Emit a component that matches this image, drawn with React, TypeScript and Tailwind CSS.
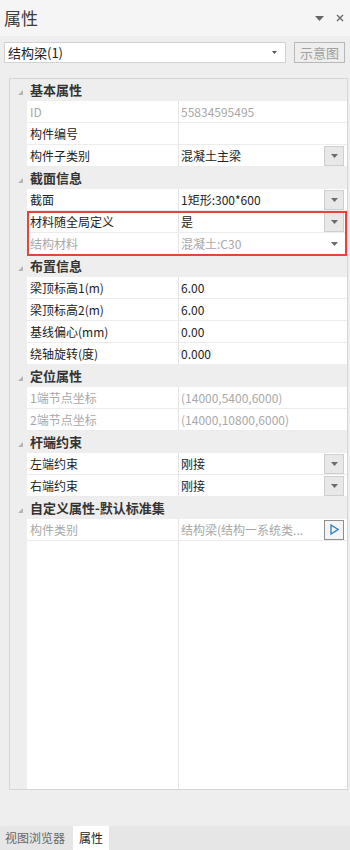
import React from 'react'

type Row =
  | { kind: 'cat'; label: string }
  | { kind: 'row'; label: string; value?: string; dim?: boolean; drop?: 'btn' | 'arrow'; more?: boolean }

const rows: Row[] = [
  { kind: 'cat', label: '基本属性' },
  { kind: 'row', label: 'ID', value: '55834595495', dim: true },
  { kind: 'row', label: '构件编号', value: '' },
  { kind: 'row', label: '构件子类别', value: '混凝土主梁', drop: 'btn' },
  { kind: 'cat', label: '截面信息' },
  { kind: 'row', label: '截面', value: '1矩形:300*600', drop: 'btn' },
  { kind: 'row', label: '材料随全局定义', value: '是', drop: 'btn' },
  { kind: 'row', label: '结构材料', value: '混凝土:C30', dim: true, drop: 'arrow' },
  { kind: 'cat', label: '布置信息' },
  { kind: 'row', label: '梁顶标高1(m)', value: '6.00' },
  { kind: 'row', label: '梁顶标高2(m)', value: '6.00' },
  { kind: 'row', label: '基线偏心(mm)', value: '0.00' },
  { kind: 'row', label: '绕轴旋转(度)', value: '0.000' },
  { kind: 'cat', label: '定位属性' },
  { kind: 'row', label: '1端节点坐标', value: '(14000,5400,6000)', dim: true },
  { kind: 'row', label: '2端节点坐标', value: '(14000,10800,6000)', dim: true },
  { kind: 'cat', label: '杆端约束' },
  { kind: 'row', label: '左端约束', value: '刚接', drop: 'btn' },
  { kind: 'row', label: '右端约束', value: '刚接', drop: 'btn' },
  { kind: 'cat', label: '自定义属性-默认标准集' },
  { kind: 'row', label: '构件类别', value: '结构梁(结构一系统类...', dim: true, more: true },
]

const Caret = () => (
  <svg width="7" height="4" viewBox="0 0 7 4">
    <path d="M0 0h7L3.5 4z" fill="#6b6b6b" />
  </svg>
)

function CatRow({ label }: { label: string }) {
  return (
    <div className="flex h-[22px] items-center bg-[#eeeeee]">
      <div className="flex w-[17px] shrink-0 justify-center pl-1 pt-1">
        <svg width="5" height="5" viewBox="0 0 5 5">
          <path d="M5 0V5H0z" fill="#b5b5b5" />
        </svg>
      </div>
      <span className="pl-[3px] text-[13px] font-bold text-[#333]">{label}</span>
    </div>
  )
}

function DataRow({ r }: { r: Extract<Row, { kind: 'row' }> }) {
  const tc = r.dim ? 'text-[#a8a8a8]' : 'text-[#222]'
  return (
    <div className="flex h-[22px] bg-[#eeeeee]">
      <div className="w-[17px] shrink-0" />
      <div className="flex flex-1 border-b border-[#ececec] bg-white">
        <div className={`flex w-[152px] shrink-0 items-center border-r border-[#e4e4e4] pl-[3px] text-[12px] ${tc}`}>
          {r.label}
        </div>
        <div className={`flex flex-1 items-center pl-[2px] text-[12px] ${tc}`}>
          <span className="flex-1 truncate">{r.value}</span>
          {r.drop === 'btn' && (
            <div className="mr-[3px] flex h-[20px] w-[20px] items-center justify-center border border-[#cfcfcf] bg-[#e8e8e8]">
              <Caret />
            </div>
          )}
          {r.drop === 'arrow' && (
            <div className="mr-[3px] flex h-[20px] w-[20px] items-center justify-center">
              <Caret />
            </div>
          )}
          {r.more && (
            <div className="mr-[3px] flex h-[20px] w-[20px] items-center justify-center border border-[#8f8f8f] bg-[#f4f4f4]">
              <svg width="9" height="11" viewBox="0 0 9 11">
                <path d="M1 1L8 5.5L1 10z" fill="none" stroke="#2a7fc9" strokeWidth="1.3" />
              </svg>
            </div>
          )}
        </div>
      </div>
    </div>
  )
}

export default function App() {
  const before = rows.slice(0, 6)
  const boxed = rows.slice(6, 8)
  const after = rows.slice(8)
  const render = (r: Row, i: number) =>
    r.kind === 'cat' ? <CatRow key={i} label={r.label} /> : <DataRow key={i} r={r} />

  return (
    <div
      className="flex h-[850px] w-[350px] flex-col bg-[#eeeeee]"
      style={{ fontFamily: '"Noto Sans CJK SC", "Liberation Sans", sans-serif' }}
    >
      <div className="flex h-[36px] items-center justify-between bg-[#f5f5f5] pl-[4px] pr-[6px]">
        <span className="text-[17px] text-[#3c3c3c]">属性</span>
        <div className="flex items-center gap-[12px]">
          <svg width="9" height="5" viewBox="0 0 9 5">
            <path d="M0 0h9L4.5 5z" fill="#666" />
          </svg>
          <svg width="8" height="8" viewBox="0 0 8 8">
            <path d="M1 1L7 7M7 1L1 7" stroke="#666" strokeWidth="1.3" />
          </svg>
        </div>
      </div>

      <div className="flex items-center gap-[8px] px-[4px] pt-[6px]">
        <div className="flex h-[21px] w-[282px] items-center justify-between border border-[#d2d2d2] bg-white pl-[3px] pr-[8px] text-[13px] text-[#222]">
          <span>结构梁(1)</span>
          <svg width="5" height="3" viewBox="0 0 5 3">
            <path d="M0 0h5L2.5 3z" fill="#555" />
          </svg>
        </div>
        <div className="flex h-[21px] w-[51px] items-center justify-center border border-[#b8b8b8] text-[13px] text-[#a0a0a0]">
          示意图
        </div>
      </div>

      <div className="ml-[9px] mr-[2px] mt-[15px] flex h-[712px] flex-col border border-[#d6d6d6] bg-white">
        <div className="flex flex-col">
          {before.map(render)}
          <div className="relative">
            {boxed.map((r, i) => render(r, 100 + i))}
            <div className="pointer-events-none absolute bottom-[-1px] left-[17px] right-[0px] top-[0px] border-2 border-[#e8423a]" />
          </div>
          {after.map(render)}
        </div>
        <div className="flex flex-1">
          <div className="w-[17px] shrink-0 bg-[#eeeeee]" />
          <div className="w-[152px] shrink-0 border-r border-[#e4e4e4]" />
          <div className="flex-1" />
        </div>
      </div>

      <div className="flex-1" />
      <div className="flex h-[24px] items-stretch bg-[#e6e6e6] text-[12px]">
        <div className="flex items-center pl-[5px] pr-[8px] text-[#666]">视图浏览器</div>
        <div className="flex items-center bg-white px-[6px] text-[#222]">属性</div>
      </div>
    </div>
  )
}
